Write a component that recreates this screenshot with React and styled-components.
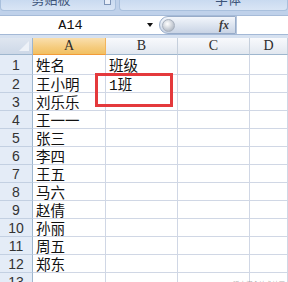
import React from 'react';
import styled, { createGlobalStyle, css } from 'styled-components';

const GlobalStyle = createGlobalStyle`
  html, body {
    margin: 0;
    padding: 0;
    width: 288px;
    height: 282px;
    overflow: hidden;
    background: #ffffff;
  }
  #root {
    width: 100%;
    height: 100%;
  }
`;

const Window = styled.div`
  width: 288px;
  height: 282px;
  display: flex;
  flex-direction: column;
  overflow: hidden;
  background: #c5d6ec;
`;

const RibbonStrip = styled.div`
  display: flex;
  gap: 3px;
  height: 15px;
  padding-bottom: 4px;
  box-sizing: border-box;
  background: #bfd1ea;
  flex-shrink: 0;
`;

const RibbonGroup = styled.div`
  position: relative;
  width: ${p => (p.$width ? `${p.$width}px` : 'auto')};
  flex: ${p => (p.$grow ? '1 0 auto' : '0 0 auto')};
  height: 11px;
  display: flex;
  align-items: flex-end;
  justify-content: ${p => (p.$grow ? 'flex-start' : 'center')};
  padding-left: ${p => (p.$grow ? '95px' : '0')};
  padding-right: ${p => (p.$grow ? '0' : '14px')};
  box-sizing: border-box;
  overflow: hidden;
  background: linear-gradient(#c9daf0, #d9e5f5);
  border: 1px solid #a9c0dd;
  border-top: none;
  border-radius: 0 0 4px 4px;
`;

const RibbonLabel = styled.span`
  font-family: "Noto Sans CJK SC", sans-serif;
  font-size: 13px;
  line-height: 14px;
  padding-bottom: 4px;
  color: #3d5479;
`;

const Launcher = styled.span`
  position: absolute;
  right: 4px;
  top: 0;
  width: 5px;
  height: 4px;
  border: 1px solid #7e95b8;
  border-top: none;
  background: #e8eef8;
`;

const FormulaBar = styled.div`
  display: flex;
  height: 19px;
  flex-shrink: 0;
  background: #ffffff;
  border-top: 1px solid #a6bbd8;
  box-sizing: border-box;
`;

const NameBox = styled.div`
  width: 159px;
  display: flex;
  align-items: center;
  justify-content: center;
  position: relative;
  font-family: "Liberation Mono", monospace;
  font-size: 13.5px;
  color: #111;
  padding-right: 18px;
  box-sizing: border-box;
`;

const DropArrow = styled.span`
  position: absolute;
  right: 6px;
  top: 7px;
  width: 0;
  height: 0;
  border-left: 3.5px solid transparent;
  border-right: 3.5px solid transparent;
  border-top: 4px solid #111;
`;

const FxPill = styled.div`
  width: 77px;
  display: flex;
  align-items: center;
  justify-content: space-between;
  padding: 0 6px 0 2px;
  box-sizing: border-box;
  background: linear-gradient(#f3f6fb, #dbe3ef 55%, #c9d4e5);
  border: 1px solid #98acc9;
  border-radius: 9px 0 0 9px;
`;

const Knob = styled.span`
  width: 11px;
  height: 11px;
  border-radius: 50%;
  background: radial-gradient(circle at 40% 35%, #ffffff, #c3c9d2 60%, #9aa3b0);
  border: 1px solid #a7b0bd;
`;

const Fx = styled.span`
  font-family: "Liberation Serif", serif;
  font-style: italic;
  font-weight: bold;
  font-size: 12px;
  color: #3a3a3a;
`;

const FormulaInput = styled.div`
  flex: 1;
  background: #ffffff;
  border-left: 1px solid #b5c5dc;
`;

const Band = styled.div`
  height: 4px;
  flex-shrink: 0;
  background: #d6e1f0;
  border-top: 1px solid #a3b8d6;
  box-sizing: border-box;
`;

const SheetWrap = styled.div`
  position: relative;
  flex: 1;
  background: #ffffff;
`;

const Sheet = styled.div`
  display: grid;
  grid-template-columns: 33px 73px 72px 72px 1fr;
  grid-template-rows: 17px 20px;
  grid-auto-rows: 18px;
`;

const cellBase = css`
  box-sizing: border-box;
  display: flex;
  align-items: center;
  overflow: hidden;
  white-space: nowrap;
`;

const Corner = styled.div`
  ${cellBase};
  position: relative;
  background: linear-gradient(#dfe6f0, #cdd8e7);
  border-right: 1px solid #9eb6ce;
  border-bottom: 1px solid #9eb6ce;

  &::after {
    content: '';
    position: absolute;
    right: 3px;
    bottom: 3px;
    width: 0;
    height: 0;
    border-left: 10px solid transparent;
    border-bottom: 10px solid #eef2f8;
  }
`;

const ColHead = styled.div`
  ${cellBase};
  justify-content: center;
  font-family: "Liberation Serif", serif;
  font-size: 14px;
  color: #2b2b2b;
  border-right: 1px solid ${p => (p.$active ? '#f2b45c' : '#c5cfdc')};
  border-bottom: 1px solid ${p => (p.$active ? '#f29b38' : '#9eb6ce')};
  background: ${p =>
    p.$active
      ? 'linear-gradient(#fadfae, #f5cb7c 60%, #f1c062)'
      : 'linear-gradient(#f8f9fc, #ebeff5 60%, #e1e7ef)'};
`;

const RowHead = styled.div`
  ${cellBase};
  justify-content: center;
  font-family: "Liberation Sans", sans-serif;
  font-size: 14px;
  color: #333;
  background: #e4ecf7;
  border-right: 1px solid #9eb6ce;
  border-bottom: 1px solid #c3d0e2;
`;

const Cell = styled.div`
  ${cellBase};
  padding-left: 3px;
  font-family: "Liberation Mono", "Noto Sans CJK SC", monospace;
  font-size: 14.5px;
  color: #111;
  border-right: 1px solid #d0d7e5;
  border-bottom: 1px solid #d0d7e5;
`;

const Highlight = styled.div`
  position: absolute;
  left: 95px;
  top: 35px;
  width: 78px;
  height: 34px;
  box-sizing: border-box;
  border: 3px solid #e4393c;
`;

const Watermark = styled.div`
  position: absolute;
  right: 3px;
  bottom: 3px;
  font-family: "Noto Sans CJK SC", sans-serif;
  font-size: 6.5px;
  line-height: 7px;
  color: rgba(140, 140, 140, 0.75);
`;

const rows = [
  ['姓名', '班级'],
  ['王小明', '1班'],
  ['刘乐乐', ''],
  ['王一一', ''],
  ['张三', ''],
  ['李四', ''],
  ['王五', ''],
  ['马六', ''],
  ['赵倩', ''],
  ['孙丽', ''],
  ['周五', ''],
  ['郑东', ''],
  ['', ''],
];

export default function App() {
  return (
    <Window>
      <GlobalStyle />
      <RibbonStrip>
        <RibbonGroup $width={116}>
          <RibbonLabel>剪贴板</RibbonLabel>
          <Launcher />
        </RibbonGroup>
        <RibbonGroup $grow>
          <RibbonLabel>字体</RibbonLabel>
        </RibbonGroup>
      </RibbonStrip>

      <FormulaBar>
        <NameBox>
          A14
          <DropArrow />
        </NameBox>
        <FxPill>
          <Knob />
          <Fx>fx</Fx>
        </FxPill>
        <FormulaInput />
      </FormulaBar>
      <Band />

      <SheetWrap>
        <Sheet>
          <Corner />
          <ColHead $active>A</ColHead>
          <ColHead>B</ColHead>
          <ColHead>C</ColHead>
          <ColHead>D</ColHead>
          {rows.map((r, i) => (
            <React.Fragment key={i}>
              <RowHead>{i + 1}</RowHead>
              <Cell>{r[0]}</Cell>
              <Cell>{r[1]}</Cell>
              <Cell />
              <Cell />
            </React.Fragment>
          ))}
        </Sheet>
        <Highlight />
        <Watermark>@稀土掘金技术社区</Watermark>
      </SheetWrap>
    </Window>
  );
}
